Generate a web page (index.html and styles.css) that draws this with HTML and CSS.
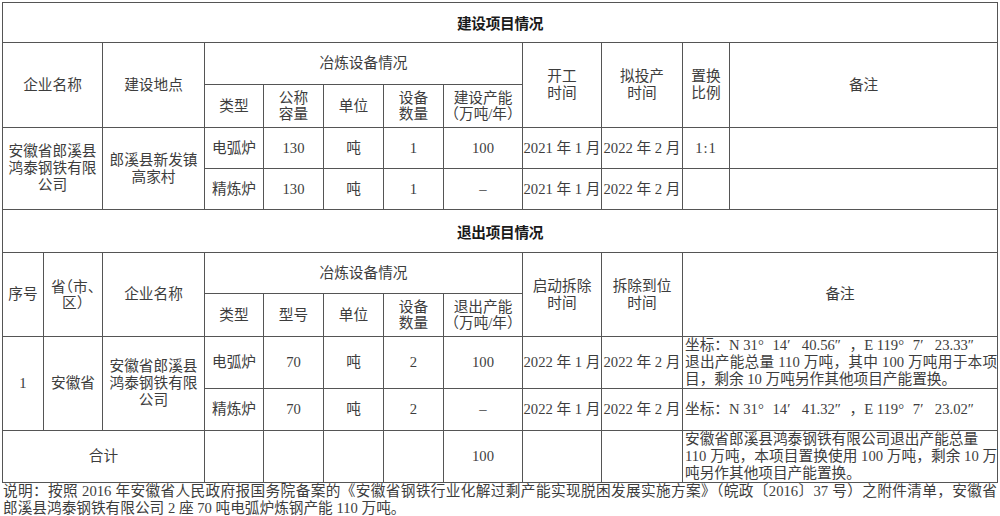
FILE: index.html
```html
<!DOCTYPE html>
<html lang="zh-CN">
<head>
<meta charset="utf-8">
<title>产能置换方案</title>
<link rel="stylesheet" href="styles.css">
</head>
<body>
<div class="page">
<table class="grid">
<colgroup>
<col class="c1"><col class="c2"><col class="c3"><col class="c4"><col class="c5"><col class="c6"><col class="c7"><col class="c8"><col class="c9"><col class="c10"><col class="c11"><col class="c12">
</colgroup>
<tbody>
<tr class="r40"><td colspan="12" class="title">建设项目情况</td></tr>
<tr class="r42">
<td colspan="2" rowspan="2">企业名称</td>
<td rowspan="2">建设地点</td>
<td colspan="5">冶炼设备情况</td>
<td rowspan="2">开工<br>时间</td>
<td rowspan="2">拟投产<br>时间</td>
<td rowspan="2">置换<br>比例</td>
<td rowspan="2">备注</td>
</tr>
<tr class="r43">
<td>类型</td>
<td class="hl">公称<br>容量</td>
<td>单位</td>
<td class="hl">设备<br>数量</td>
<td class="hl">建设产能<br><span class="halt">（</span>万吨/年<span class="halt">）</span></td>
</tr>
<tr class="r41">
<td colspan="2" rowspan="2">安徽省郎溪县<br>鸿泰钢铁有限<br>公司</td>
<td rowspan="2">郎溪县新发镇<br>高家村</td>
<td>电弧炉</td>
<td>130</td>
<td>吨</td>
<td>1</td>
<td>100</td>
<td>2021 年 1 月</td>
<td>2022 年 2 月</td>
<td class="ratio">1:1</td>
<td></td>
</tr>
<tr class="r41">
<td>精炼炉</td>
<td>130</td>
<td>吨</td>
<td>1</td>
<td class="dash">–</td>
<td>2021 年 1 月</td>
<td>2022 年 2 月</td>
<td></td>
<td></td>
</tr>
<tr class="r43"><td colspan="12" class="title">退出项目情况</td></tr>
<tr class="r41">
<td rowspan="2">序号</td>
<td rowspan="2" class="hl">省<span class="halt">（</span>市<span class="halt">、</span><br>区<span class="halt">）</span></td>
<td rowspan="2">企业名称</td>
<td colspan="5">冶炼设备情况</td>
<td rowspan="2">启动拆除<br>时间</td>
<td rowspan="2">拆除到位<br>时间</td>
<td colspan="2" rowspan="2">备注</td>
</tr>
<tr class="r43">
<td>类型</td>
<td>型号</td>
<td>单位</td>
<td class="hl">设备<br>数量</td>
<td class="hl">退出产能<br><span class="halt">（</span>万吨/年<span class="halt">）</span></td>
</tr>
<tr class="r51">
<td rowspan="2">1</td>
<td rowspan="2">安徽省</td>
<td rowspan="2">安徽省郎溪县<br>鸿泰钢铁有限<br>公司</td>
<td>电弧炉</td>
<td>70</td>
<td>吨</td>
<td>2</td>
<td>100</td>
<td>2022 年 1 月</td>
<td>2022 年 2 月</td>
<td colspan="2" class="remark">
<div>坐标：N 31<span class="fw">°</span>14<span class="fw">′</span>40.56<span class="fw">″</span>，E 119<span class="fw">°</span>7<span class="fw">′</span>23.33<span class="fw">″</span></div>
<div class="j">退出产能总量 110 万吨，其中 100 万吨用于本项</div>
<div>目，剩余 10 万吨另作其他项目产能置换。</div>
</td>
</tr>
<tr class="r42">
<td>精炼炉</td>
<td>70</td>
<td>吨</td>
<td>2</td>
<td class="dash">–</td>
<td>2022 年 1 月</td>
<td>2022 年 2 月</td>
<td colspan="2" class="remark">
<div>坐标：N 31<span class="fw">°</span>14<span class="fw">′</span>41.32<span class="fw">″</span>，E 119<span class="fw">°</span>7<span class="fw">′</span>23.02<span class="fw">″</span></div>
</td>
</tr>
<tr class="r51">
<td colspan="3">合计</td>
<td></td>
<td></td>
<td></td>
<td></td>
<td>100</td>
<td></td>
<td></td>
<td colspan="2" class="remark">
<div>安徽省郎溪县鸿泰钢铁有限公司退出产能总量</div>
<div class="j">110 万吨，本项目置换使用 100 万吨，剩余 10 万</div>
<div>吨另作其他项目产能置换。</div>
</td>
</tr>
</tbody>
</table>
<div class="note">
<div class="j">说明：按照 2016 年安徽省人民政府报国务院备案的《安徽省钢铁行业化解过剩产能实现脱困发展实施方案》（皖政〔2016〕37 号）之附件清单，安徽省</div>
<div>郎溪县鸿泰钢铁有限公司 2 座 70 吨电弧炉炼钢产能 110 万吨。</div>
</div>
</div>
</body>
</html>
```

FILE: styles.css
```css
html, body {
  margin: 0;
  padding: 0;
  background: #ffffff;
}

body {
  font-family: "Liberation Serif", "Noto Sans CJK SC", serif;
  font-size: 14.67px;
  color: #3d3d3d;
}

.page {
  padding: 2px 0 0 2px;
  width: 996px;
}

.grid {
  border-collapse: collapse;
  table-layout: fixed;
  width: 996px;
}

.c1 { width: 41px; }
.c2 { width: 59px; }
.c3 { width: 102px; }
.c4 { width: 59px; }
.c5 { width: 60px; }
.c6 { width: 60px; }
.c7 { width: 60px; }
.c8 { width: 79px; }
.c9 { width: 79px; }
.c10 { width: 81px; }
.c11 { width: 47px; }
.c12 { width: 268px; }

.grid td {
  border: 1px solid #555555;
  padding: 0;
  text-align: center;
  vertical-align: middle;
  line-height: 17px;
  white-space: nowrap;
  overflow: hidden;
}

.r40 { height: 40px; }
.r41 { height: 41px; }
.r42 { height: 42px; }
.r43 { height: 43px; }
.r51 { height: 51px; }

.grid td.title {
  font-family: "Noto Sans CJK SC", sans-serif;
  font-weight: bold;
  color: #1a1a1a;
  letter-spacing: -0.3px;
}

.grid td.hl {
  line-height: 16px;
}

.halt {
  font-feature-settings: "halt";
}

.ratio {
  letter-spacing: 1px;
}

.grid td.remark {
  text-align: left;
  padding-left: 2px;
  white-space: normal;
  line-height: 17px;
}

.fw {
  display: inline-block;
  width: 1em;
  text-align: left;
}

.j {
  text-align: justify;
  text-align-last: justify;
}

.note {
  width: 994px;
  padding-left: 1px;
  line-height: 17px;
}
```
